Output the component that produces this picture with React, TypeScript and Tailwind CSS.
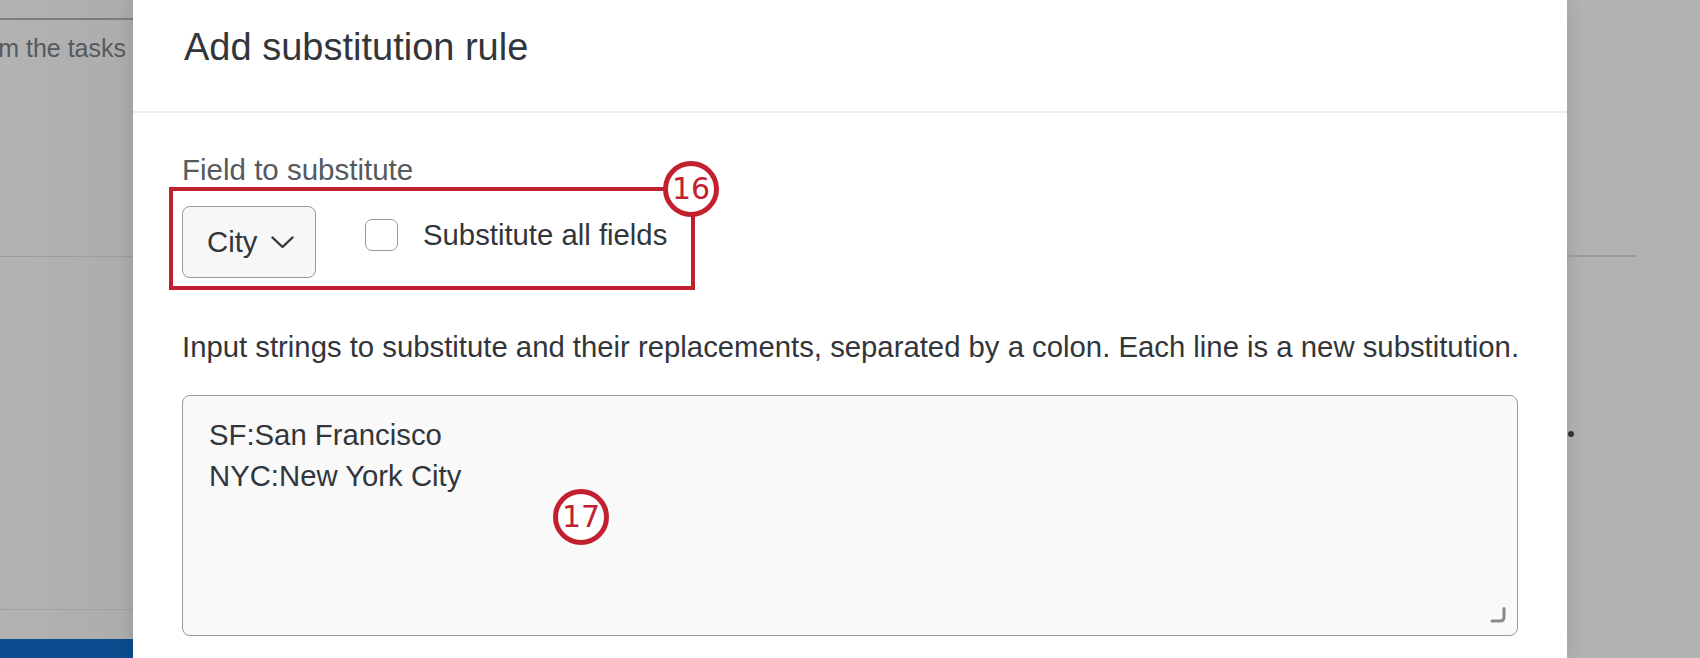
import React from 'react';

const font = { fontFamily: '"Liberation Sans", Arial, Helvetica, sans-serif' };

function Marker({ n, className }: { n: number; className: string }) {
  return (
    <div
      className={`absolute flex h-[56px] w-[56px] items-center justify-center rounded-full border-[5px] border-[#c3202f] bg-white text-[30px] leading-none text-[#c3202f] ${className}`}
      style={{ fontFamily: '"DejaVu Sans", Verdana, sans-serif' }}
    >
      {n}
    </div>
  );
}

export default function App() {
  return (
    <div className="flex h-[658px] w-full overflow-hidden bg-[#b2b2b2]" style={font}>
      {/* page behind the overlay, left side */}
      <div className="flex w-[133px] shrink-0 flex-col bg-gradient-to-r from-[#b3b3b3] to-[#acacac]">
        <div className="mt-[18px] h-[2px] w-full bg-[#7d7d7d]" />
        <div className="mt-[10px] flex justify-end whitespace-nowrap pr-[7px] text-[25px] leading-[36px] text-[#555a5e]">
          m the tasks
        </div>
        <div className="mt-[190px] h-px w-full bg-[#9d9d9d]" />
        <div className="mt-[352px] h-px w-full bg-[#a1a1a1]" />
        <div className="mt-[29px] flex-1 bg-[#0b4c8e]" />
      </div>

      {/* modal */}
      <div className="w-[1434px] shrink-0 bg-white shadow-[0_0_18px_rgba(0,0,0,0.12)]">
        <div className="h-[113px] border-b-2 border-[#ededed] px-[51px] pt-[25px]">
          <h2 className="text-[38px] leading-[44px] text-[#32363a]">Add substitution rule</h2>
        </div>

        <div className="px-[49px] pt-[39px]">
          <label className="block text-[29.5px] leading-[36px] text-[#545a5f]">Field to substitute</label>

          <div className="relative mt-[18px] flex items-start">
            <button className="flex h-[72px] w-[134px] items-center rounded-[8px] border-[1.5px] border-[#9a9a9a] bg-[#f7f7f7] pl-[24px] text-[29.3px] text-[#32363a]">
              City
              <svg className="ml-[14px]" width="23" height="13" viewBox="0 0 23 13" fill="none">
                <polyline points="1.5,1.5 11.5,11 21.5,1.5" stroke="#32363a" strokeWidth="2.4" strokeLinecap="round" strokeLinejoin="round" />
              </svg>
            </button>

            <label className="ml-[49px] mt-[11px] flex h-[36px] items-center">
              <span className="h-[32px] w-[33px] rounded-[7px] border-[1.5px] border-[#9a9a9a] bg-white" />
              <span className="ml-[25px] text-[29.3px] leading-[36px] text-[#32363a]">Substitute all fields</span>
            </label>

            {/* annotation */}
            <div className="absolute left-[-13px] top-[-19px] h-[103px] w-[526px] border-[4px] border-[#c3202f]" />
            <Marker n={16} className="left-[481px] top-[-45px]" />
          </div>

          <p className="mt-[51px] whitespace-nowrap text-[29.3px] leading-[36px] text-[#32363a]">
            Input strings to substitute and their replacements, separated by a colon. Each line is a new substitution.
          </p>

          <div className="relative mt-[30px]">
            <textarea
              readOnly
              defaultValue={'SF:San Francisco\nNYC:New York City'}
              className="block h-[241px] w-full resize-none rounded-[8px] border-[1.5px] border-[#9a9a9a] bg-[#f9f9f9] pl-[26px] pt-[18px] text-[29.3px] leading-[41px] text-[#32363a] outline-none"
              style={font}
            />
            <svg className="absolute bottom-[13px] right-[12px]" width="16" height="16" viewBox="0 0 16 16" fill="none">
              <path d="M14 1.5V10Q14 14 10 14H2" stroke="#8a8a8a" strokeWidth="3" strokeLinecap="round" />
            </svg>
            <Marker n={17} className="left-[371px] top-[94px]" />
          </div>
        </div>
      </div>

      {/* page behind the overlay, right side */}
      <div className="flex flex-1 flex-col">
        <div className="mt-[255px] h-[2px] w-[70px] bg-[#9a9a9a]" />
        <div className="ml-[1px] mt-[174px] h-[6px] w-[6px] rounded-full bg-[#333]" />
      </div>
    </div>
  );
}
